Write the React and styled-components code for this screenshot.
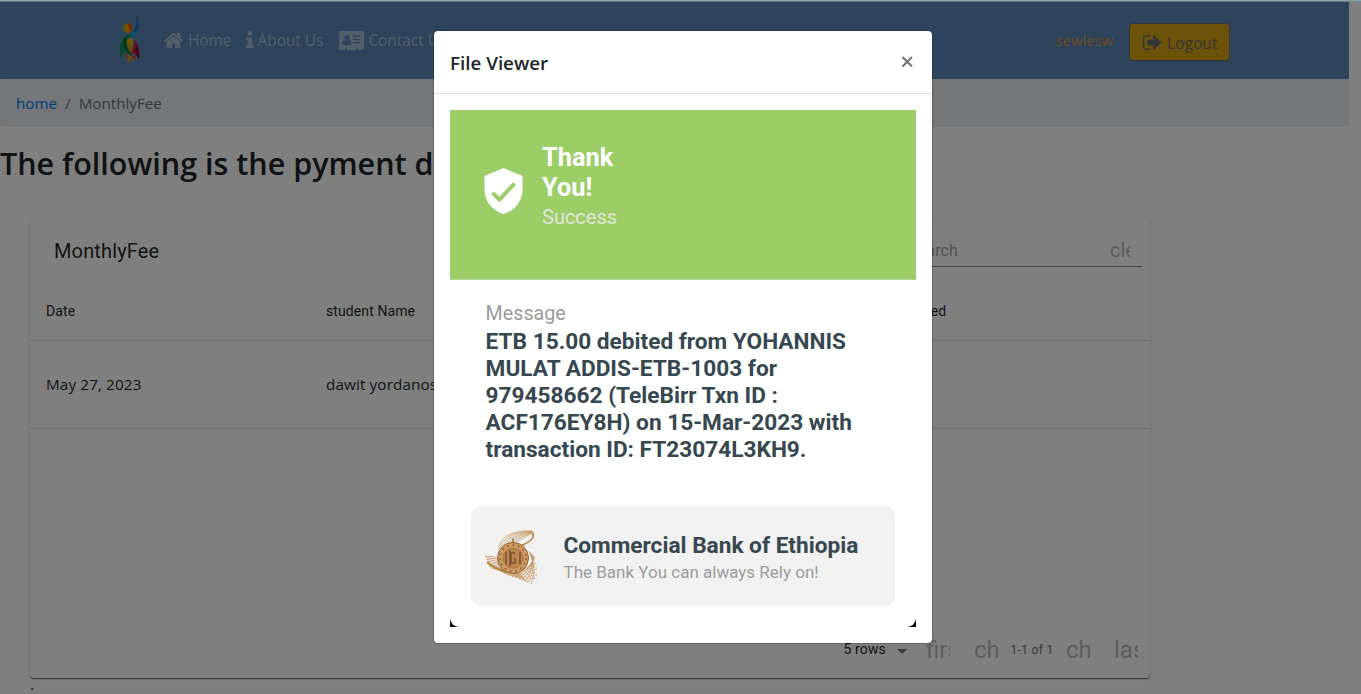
import React from "react";
import styled, { createGlobalStyle } from "styled-components";

const Global = createGlobalStyle`
  * { box-sizing: border-box; }
  html, body { margin: 0; height: 694px; overflow: hidden; background: #fff; }
  body { font-family: "Open Sans", "Noto Sans", sans-serif; font-size: 16px; line-height: 24px; color: #212529; }
`;

const Page = styled.div`
  position: relative;
  height: 694px;
  overflow: hidden;
  border-top: 1px solid #86a5b5;
`;
const Content = styled.main`
  width: 1349px;
  border-top: 1px solid #e6eaee;
`;
const Navbar = styled.nav`
  display: flex;
  align-items: center;
  height: 77px;
  padding: 0 119px 0 118px;
  background: #5a88b8;
`;
const NavLink = styled.a`
  display: flex;
  align-items: center;
  gap: 4px;
  margin-left: ${(p) => p.$left}px;
  font-size: ${(p) => p.$size || 15.4}px;
  color: ${(p) => p.$color || "#a9bdd2"};
  white-space: nowrap;
`;
const UserLink = styled(NavLink)`
  padding-bottom: 2px;
`;
const Spacer = styled.div`
  flex: 1;
`;
const LogoutButton = styled.button`
  display: flex;
  align-items: center;
  gap: 5px;
  width: 101px;
  height: 38px;
  margin: 3px 0 0 16px;
  padding: 1px 11px 0 12px;
  border: 1px solid #6b7076;
  border-radius: 4px;
  background: #dba412;
  color: #6b7076;
  font: 15.6px/24px "Open Sans", sans-serif;
`;
const Breadcrumb = styled.div`
  display: flex;
  gap: 8px;
  height: 48px;
  padding: 12px 16px;
  border-radius: 4px;
  background: #e9ecef;
  color: #6c757d;
  font-size: 15.2px;
  a { color: #007bff; }
`;
const Heading = styled.h2`
  margin: 16px 0 0;
  height: 39px;
  font-size: 30.5px;
  line-height: 41px;
  font-weight: 600;
  white-space: nowrap;
`;
const Paper = styled.section`
  display: flex;
  flex-direction: column;
  width: 1120px;
  height: 459px;
  margin: 37px 0 0 30px;
  border-radius: 4px;
  background: #fff;
  box-shadow: 0 2px 1px -1px rgba(0,0,0,.3), 0 1px 1px rgba(0,0,0,.24), 0 1px 3px rgba(0,0,0,.22);
  font-family: Roboto, sans-serif;
  color: rgba(0,0,0,.87);
`;
const Toolbar = styled.div`
  display: flex;
  justify-content: space-between;
  align-items: center;
  height: 64px;
  padding: 0 8px 0 24px;
`;
const TableTitle = styled.h6`
  margin: 0;
  font-size: 20px;
  font-weight: 400;
  letter-spacing: .15px;
`;
const Search = styled.div`
  display: flex;
  justify-content: space-between;
  align-items: center;
  width: 270px;
  height: 33px;
  margin-top: -1px;
  padding: 1px 12px 0 36px;
  border-bottom: 1px solid rgba(0,0,0,.45);
  color: #a4a4a4;
  letter-spacing: .15px;
`;
const Ligature = styled.span`
  display: block;
  width: ${(p) => p.$size}px;
  font-size: ${(p) => p.$size}px;
  line-height: 26px;
  letter-spacing: 0;
  overflow: hidden;
  white-space: nowrap;
  color: #bdbdbd;
`;
const ClearLigature = styled(Ligature)`
  margin-top: -2px;
`;
const Row = styled.div`
  display: grid;
  grid-template-columns: repeat(4, 280px);
  align-items: center;
  height: ${(p) => (p.$head ? 58 : 88)}px;
  padding: 0 0 2px 16px;
  border-bottom: 1px solid #dedede;
  font: ${(p) => (p.$head ? "14px Roboto" : '15.3px "Open Sans"')}, sans-serif;
  letter-spacing: .1px;
`;
const Footer = styled.div`
  display: flex;
  align-items: center;
  justify-content: flex-end;
  margin-top: auto;
  height: 56px;
  font-size: 14px;
`;
const RowCount = styled.div`
  display: flex;
  align-items: center;
  gap: 11px;
  margin: -2px 7px 0 0;
  letter-spacing: .15px;
`;
const Caret = styled.i`
  border: 5px solid transparent;
  border-top-color: #757575;
  border-bottom: 0;
  margin-top: 5px;
`;
const PageButton = styled.div`
  width: 48px;
  padding: 12px;
`;
const Caption = styled.span`
  width: 44px;
  text-align: center;
  font-size: 12px;
  letter-spacing: .3px;
  color: #757575;
`;
const Dot = styled.div`
  margin-left: 30px;
  line-height: 13px;
`;
const Backdrop = styled.div`
  position: absolute;
  inset: -1px 0 0;
  display: flex;
  justify-content: center;
  align-items: flex-start;
  padding: 30px 0 0 5px;
  background: rgba(0,0,0,.5);
`;
const Dialog = styled.div`
  width: 500px;
  height: 614px;
  border: 1px solid rgba(0,0,0,.2);
  border-radius: 5px;
  background: #fff;
  background-clip: padding-box;
`;
const DialogHeader = styled.header`
  display: flex;
  justify-content: space-between;
  align-items: center;
  height: 63px;
  padding: 1px 18px 0 16px;
  border-bottom: 1px solid #dee2e6;
  font-size: 18.8px;
  font-weight: 600;
  svg { margin-top: -2px; }
`;
const Receipt = styled.div`
  height: 517px;
  margin: 16px 16px 0;
  background: #000;
  font-family: Roboto, sans-serif;
`;
const ReceiptInner = styled.div`
  height: 517px;
  border-radius: 0 0 9px 9px;
  background: #fff;
`;
const Banner = styled.div`
  display: flex;
  align-items: center;
  gap: 19px;
  height: 170px;
  padding: 0 34px 7px;
  background: #9ccd67;
  border-bottom: 1px solid #b9d49c;
`;
const BannerText = styled.div`
  padding-bottom: 8px;
  color: #fff;
  strong { display: block; width: 90px; font-size: 25.4px; line-height: 30px; font-weight: 700; }
  span { display: block; font-size: 20px; line-height: 30px; color: #dfe6d8; }
`;
const Message = styled.div`
  height: 226px;
  padding: 20px 0 0 35.6px;
  color: #9b9b9b;
  font-size: 19.7px;
  line-height: 28px;
  p { margin: 0; color: #37474f; font-size: 22.65px; line-height: 27px; font-weight: 700; white-space: nowrap; }
`;
const Bank = styled.div`
  display: flex;
  align-items: center;
  width: 424px;
  height: 99.500px;
  margin-left: 21px;
  padding: 2px 0 0 13px;
  border-radius: 10px;
  background: #f1f1f1;
  gap: 23.5px;
`;
const BankText = styled.div`
  padding-top: 4px;
  white-space: nowrap;
  color: #9b9b9b;
  font-size: 17px;
  line-height: 27px;
  strong { display: block; color: #37474f; font-size: 22.65px; line-height: 27px; }
`;

const HomeIcon = () => (
  <svg width="21" height="21" viewBox="0 0 1792 1792" fill="currentColor"><path d="M1472 992v480q0 26-19 45t-45 19h-384v-384h-256v384h-384q-26 0-45-19t-19-45v-480q0-1 .5-3t.5-3l575-474 575 474q1 2 1 6zm223-69l-62 74q-8 9-21 11h-3q-13 0-21-7l-692-577-692 577q-12 8-24 7-13-2-21-11l-62-74q-8-10-7-23.500t11-21.500l719-599q32-26 76-26t76 26l244 204v-195q0-14 9-23t23-9h192q14 0 23 9t9 23v408l219 182q10 8 11 21.500t-7 23.500z" /></svg>
);
const InfoIcon = () => (
  <svg width="8" height="21" viewBox="560 0 680 1792" fill="currentColor"><path d="M1216 1344v128q0 26-19 45t-45 19h-512q-26 0-45-19t-19-45v-128q0-26 19-45t45-19h64v-384h-64q-26 0-45-19t-19-45v-128q0-26 19-45t45-19h384q26 0 45 19t19 45v576h64q26 0 45 19t19 45zm-128-1152v192q0 26-19 45t-45 19h-256q-26 0-45-19t-19-45v-192q0-26 19-45t45-19h256q26 0 45 19t19 45z" /></svg>
);
const CardIcon = () => (
  <svg width="25" height="19" viewBox="0 0 25 19">
    <path fill="currentColor" d="M2 0H23Q25 0 25 2V17Q25 19 23 19H19V17.500H17V19H8V17.500H6V19H2Q0 19 0 17V2Q0 0 2 0Z" />
    <g fill="#5a88b8"><circle cx="8" cy="6.700" r="2.700" /><path d="M5.500 9Q3.500 9 3.500 12Q3.500 14 5 14H11Q12.500 14 12.500 12Q12.500 9 10.500 9Q8 11 5.500 9Z" /><path d="M14 4.500H21.500V6H14ZM14 8H21.500V9.300H14ZM14 11H21.500V12.300H14Z" /></g>
  </svg>
);
const LogoutIcon = () => (
  <svg width="20" height="21" viewBox="30 0 1640 1792" fill="currentColor"><path d="M704 1440q0 4 1 20t.5 26.500-3 23.500-10 19.500-20.500 6.500h-320q-119 0-203.500-84.500t-84.500-203.500v-704q0-119 84.500-203.500t203.500-84.500h320q13 0 22.500 9.500t9.500 22.500q0 4 1 20t.5 26.500-3 23.500-10 19.500-20.500 6.500h-320q-66 0-113 47t-47 113v704q0 66 47 113t113 47h312l11.500 1 11.500 3 8 5.500 7 9 2 13.500zm928-544q0 26-19 45l-544 544q-19 19-45 19t-45-19-19-45v-288h-448q-26 0-45-19t-19-45v-384q0-26 19-45t45-19h448v-288q0-26 19-45t45-19 45 19l544 544q19 19 19 45z" /></svg>
);
const BrandLogo = () => (
  <svg width="24" height="50" viewBox="0 0 24 50">
    <path fill="#0878bd" d="M18 1C23 8 22 17 9 21C17 15 20 9 18 1Z" />
    <path fill="#16a8d8" d="M8 21C11 17 16 16 20 15C18 21 14 21 8 21Z" />
    <circle cx="10" cy="12" r="4.800" fill="#e6a000" /><path d="M9 7.300A4.800 4.800 0 0 1 12 16.300Z" fill="#e05a16" />
    <path fill="#07954a" d="M14 18C5 18 1 26 2 42L7 35C9 39 13 39 14 39C7 32 7 25 14 18Z" />
    <path fill="#d31830" d="M15 23C20 27 22 34 21 43L16 37L12 38C17 32 17 28 15 23Z" />
    <path fill="#8c002e" d="M18 27Q22 34 21 43L17 37Q19 33 18 27Z" />
    <path fill="#d49720" d="M9 29H15L13 37H11ZM9 38L13 40L17 46L12 43L10 50Z" />
    <path fill="#006e39" d="M9 20C3 27 6 36 14 39C9 33 7 28 9 20Z" />
    <circle cx="12" cy="26" r="3.400" fill="#e6aa00" />
    <path stroke="#d84b20" strokeWidth="1.500" d="M7 38L10 42M14 39L18 44" />
  </svg>
);
const Shield = () => (
  <svg width="39" height="46" viewBox="0 0 39 46"><path fill="#fff" d="M19.500 0L38.500 8V21C38.500 33 31 42.500 19.500 46C8 42.500 .5 33 .5 21V8Z" /><path d="M8.500 25L15.500 31.500L30.500 15.500" fill="none" stroke="#9ccd67" strokeWidth="4" /></svg>
);
const BankLogo = () => (
  <svg width="56" height="58" viewBox="0 0 56 58" fill="none">
    <g stroke="#b98c50" strokeWidth=".65">
      {[0, 1, 2, 3, 4, 5, 6].map((i) => (
        <path key={`t${i}`} d={`M${15 + i * 2} ${22 - i}C${14 + i * 3} ${9 + i} ${30 + i * 2} ${2 + i} 48 ${3 + i * 0.4}C53 ${8 + i} ${44 - i} 17 ${32 - i} 20`} />
      ))}
      {[0, 1, 2, 3, 4, 5, 6, 7].map((i) => (
        <path key={`l${i}`} d={`M${1 + i * 0.8} ${28 + i * 1.7}Q18 ${28 + i * 2} ${30 + i * 2} ${40 + i * 2}`} />
      ))}
      {[0, 1, 2, 3, 4, 5, 6].map((i) => (
        <path key={`r${i}`} d={`M${45 + i} ${23 + i}Q${54 - i} 40 ${47 - i * 3} ${56 - i * 1.5}`} />
      ))}
    </g>
    <g stroke="#b98745" strokeWidth=".8" strokeDasharray="2 1.500">
      {[0, 1, 2, 3, 4, 5].map((i) => (
        <path key={`d${i}`} d={`M${3 + i * 2} ${35 + i}Q28 ${48 + i} 53 ${35 + i * 3}`} />
      ))}
    </g>
    <path stroke="#b4883c" strokeWidth="2" d="M3 34Q11 42 24 44" />
    <circle cx="29" cy="30" r="15.500" fill="#cc9960" stroke="#94643a" />
    <circle cx="29" cy="30" r="13" stroke="#7a5230" strokeWidth="1.500" strokeDasharray="1.500 4" />
    <circle cx="29" cy="30" r="10" fill="#bc8650" stroke="#a87445" />
    <path stroke="#7d5030" strokeWidth="1.500" d="M22 24V36M26 22V38M31 25H27V35H31V30M36 24V36" />
    <path stroke="#79502a" d="M29 14V10" />
  </svg>
);

export default function App() {
  return (
    <Page>
      <Global />
      <Content>
        <Navbar>
          <BrandLogo />
          <NavLink $left={21}><HomeIcon />Home</NavLink>
          <NavLink $left={14}><InfoIcon />About Us</NavLink>
          <NavLink $left={16}><CardIcon />Contact Us</NavLink>
          <Spacer />
          <UserLink $color="#dc9238" $size={14.8}>sewlesw</UserLink>
          <LogoutButton><LogoutIcon />Logout</LogoutButton>
        </Navbar>
        <Breadcrumb><a>home</a><span>/</span><span>MonthlyFee</span></Breadcrumb>
        <Heading>The following is the pyment detail</Heading>
        <Paper>
          <Toolbar>
            <TableTitle>MonthlyFee</TableTitle>
            <Search><span>Search</span><ClearLigature $size={20}>cle</ClearLigature></Search>
          </Toolbar>
          <Row $head><span>Date</span><span>student Name</span><span /><span>Approved</span></Row>
          <Row><span>May 27, 2023</span><span>dawit yordanos</span></Row>
          <Footer>
            <RowCount>5 rows<Caret /></RowCount>
            <PageButton><Ligature $size={24}>firs</Ligature></PageButton>
            <PageButton><Ligature $size={24}>ch</Ligature></PageButton>
            <Caption>1-1 of 1</Caption>
            <PageButton><Ligature $size={24}>ch</Ligature></PageButton>
            <PageButton><Ligature $size={24}>las</Ligature></PageButton>
          </Footer>
        </Paper>
        <Dot>.</Dot>
      </Content>
      <Backdrop>
        <Dialog>
          <DialogHeader>
            <span>File Viewer</span>
            <svg width="14" height="14" viewBox="0 0 14 14"><path d="M2.500 2L12 11.500M12 2L2.500 11.500" stroke="#777" strokeWidth="2.200" /></svg>
          </DialogHeader>
          <Receipt>
            <ReceiptInner>
              <Banner>
                <Shield />
                <BannerText><strong>Thank You!</strong><span>Success</span></BannerText>
              </Banner>
              <Message>
                Message
                <p>ETB 15.00 debited from YOHANNIS<br />MULAT ADDIS-ETB-1003 for<br />979458662 (TeleBirr Txn ID :<br />ACF176EY8H) on 15-Mar-2023 with<br />transaction ID: FT23074L3KH9.</p>
              </Message>
              <Bank>
                <BankLogo />
                <BankText><strong>Commercial Bank of Ethiopia</strong>The Bank You can always Rely on!</BankText>
              </Bank>
            </ReceiptInner>
          </Receipt>
        </Dialog>
      </Backdrop>
    </Page>
  );
}
